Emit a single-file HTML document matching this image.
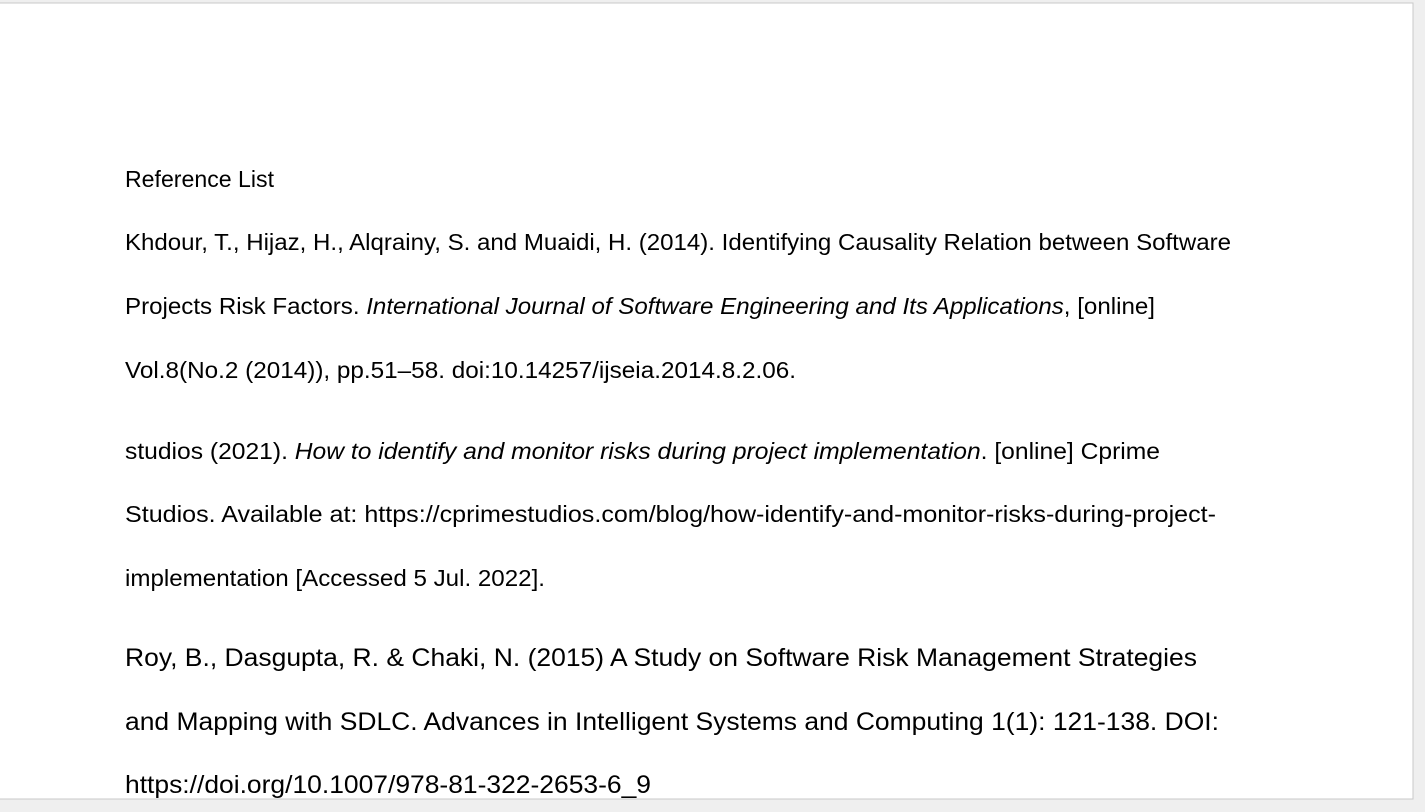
<!DOCTYPE html>
<html><head><style>
html,body{margin:0;padding:0;background:#efefef;width:1425px;height:812px;overflow:hidden}
svg{position:absolute;left:0;top:0}
</style></head><body>
<svg width="1425" height="812" xmlns="http://www.w3.org/2000/svg">
<rect x="0" y="0" width="1425" height="812" fill="#efefef"/>
<rect x="-1" y="3" width="1414" height="796" fill="#fff" stroke="#c8c8c8" stroke-width="1"/>
<g font-family="Liberation Sans, sans-serif" font-size="23" fill="#000">
<text x="125" y="187" textLength="149" lengthAdjust="spacingAndGlyphs">Reference List</text>
<text x="125" y="250" textLength="1106" lengthAdjust="spacingAndGlyphs">Khdour, T., Hijaz, H., Alqrainy, S. and Muaidi, H. (2014). Identifying Causality Relation between Software</text>
<text x="125" y="314" textLength="1030" lengthAdjust="spacingAndGlyphs">Projects Risk Factors. <tspan font-style="italic">International Journal of Software Engineering and Its Applications</tspan>, [online]</text>
<text x="125" y="378" textLength="671" lengthAdjust="spacingAndGlyphs">Vol.8(No.2 (2014)), pp.51–58. doi:10.14257/ijseia.2014.8.2.06.</text>
<text x="125" y="459" textLength="1035" lengthAdjust="spacingAndGlyphs">studios (2021). <tspan font-style="italic">How to identify and monitor risks during project implementation</tspan>. [online] Cprime</text>
<text x="125" y="522" textLength="1091" lengthAdjust="spacingAndGlyphs">Studios. Available at: https://cprimestudios.com/blog/how-identify-and-monitor-risks-during-project-</text>
<text x="125" y="586" textLength="420" lengthAdjust="spacingAndGlyphs">implementation [Accessed 5 Jul. 2022].</text>
</g>
<g font-family="Liberation Sans, sans-serif" font-size="25" fill="#000">
<text x="125" y="666" textLength="1072" lengthAdjust="spacingAndGlyphs">Roy, B., Dasgupta, R. &amp; Chaki, N. (2015) A Study on Software Risk Management Strategies</text>
<text x="125" y="730" textLength="1094" lengthAdjust="spacingAndGlyphs">and Mapping with SDLC. Advances in Intelligent Systems and Computing 1(1): 121-138. DOI:</text>
<text x="125" y="793" textLength="526" lengthAdjust="spacingAndGlyphs">https://doi.org/10.1007/978-81-322-2653-6_9</text>
</g>
</svg>
</body></html>
